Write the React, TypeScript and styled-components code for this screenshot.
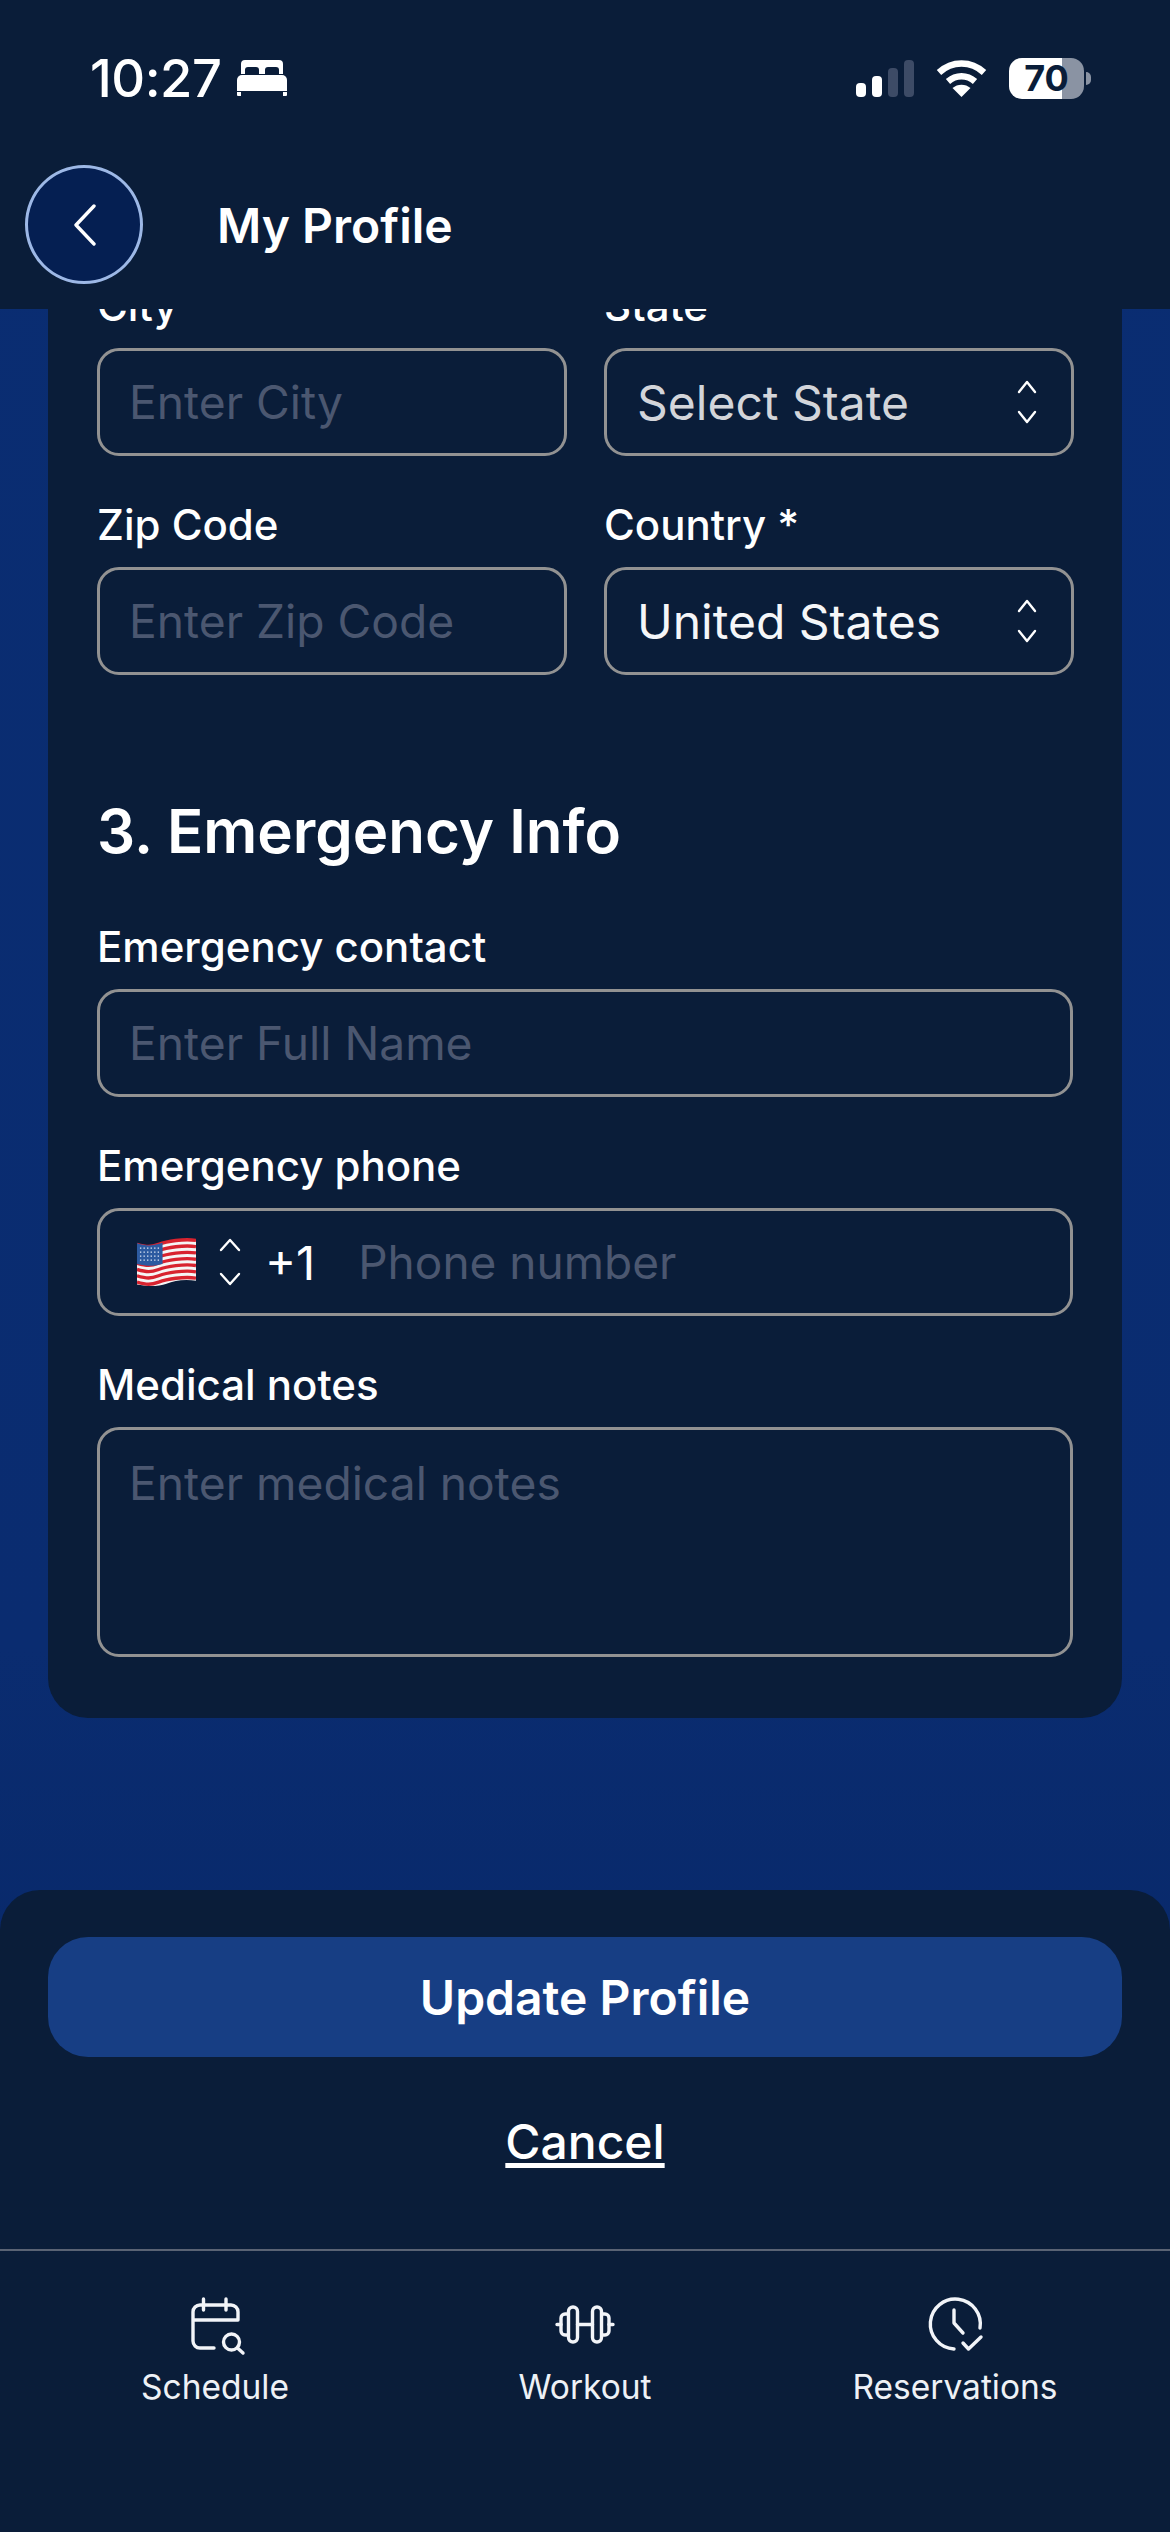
import React from 'react';
import styled, { createGlobalStyle } from 'styled-components';

const GlobalStyle = createGlobalStyle`
  html, body {
    margin: 0;
    padding: 0;
    background: #0a1d39;
  }
  * {
    box-sizing: border-box;
  }
`;

const Page = styled.div`
  width: 1170px;
  height: 2532px;
  display: flex;
  flex-direction: column;
  overflow: hidden;
  font-family: Inter, "Liberation Sans", sans-serif;
  color: #fff;
  background: linear-gradient(180deg, #0a2d72 0%, #0a2c70 65%, #062563 100%);
`;

const Header = styled.header`
  flex: none;
  height: 309px;
  background: #0a1d39;
  position: relative;
  z-index: 2;
`;

const StatusBar = styled.div`
  height: 165px;
  padding: 50px 86px 0 90px;
  display: flex;
  justify-content: space-between;
  align-items: flex-start;
`;

const TimeGroup = styled.div`
  display: flex;
  align-items: center;
  gap: 16px;
  height: 56px;
`;

const Time = styled.span`
  font-size: 52.5px;
  font-weight: 500;
  letter-spacing: -0.5px;
`;

const StatusIcons = styled.div`
  display: flex;
  align-items: center;
  height: 56px;
`;

const SignalBars = styled.div`
  display: flex;
  align-items: flex-end;
  gap: 6px;
  height: 37px;
  margin-right: 22px;
`;

const SignalBar = styled.span<{ $h: number; $on?: boolean }>`
  width: 10px;
  height: ${p => p.$h}px;
  border-radius: 4px;
  background: ${p => (p.$on ? '#ffffff' : '#3d4b66')};
`;

const Battery = styled.div`
  width: 75px;
  height: 41px;
  margin-left: 22px;
  border-radius: 13px;
  background: linear-gradient(90deg, #fff 0 53px, #8a93a3 53px 100%);
  color: #0a1d39;
  font-size: 36px;
  font-weight: 700;
  display: flex;
  align-items: center;
  justify-content: center;
  position: relative;
  &::after {
    content: '';
    position: absolute;
    right: -7px;
    top: 14px;
    width: 5px;
    height: 13px;
    border-radius: 0 6px 6px 0;
    background: #8a93a3;
  }
`;

const TitleRow = styled.div`
  display: flex;
  align-items: center;
  padding-left: 25px;
  gap: 74px;
`;

const BackButton = styled.button`
  width: 118px;
  height: 119px;
  border-radius: 50%;
  border: 3px solid #9db8e6;
  background: #051f52;
  color: #fff;
  padding: 0 0 0 2px;
  display: flex;
  align-items: center;
  justify-content: center;
`;

const Title = styled.h1`
  margin: 2px 0 0;
  font-size: 48px;
  font-weight: 600;
`;

const Main = styled.main`
  flex: 1;
  min-height: 0;
  overflow: hidden;
  padding: 0 48px;
`;

const Card = styled.section`
  margin-top: -27px;
  background: #0a1d39;
  border-radius: 0 0 40px 40px;
  padding: 0 49px 61px;
  display: flex;
  flex-direction: column;
`;

const FieldGrid = styled.div`
  display: grid;
  grid-template-columns: 470px 470px;
  column-gap: 37px;
  row-gap: 45px;
`;

const Field = styled.div`
  display: flex;
  flex-direction: column;
`;

const Label = styled.label`
  font-size: 42px;
  font-weight: 500;
  line-height: 48px;
  margin-bottom: 18px;
  color: #fff;
`;

const Input = styled.input`
  width: 100%;
  height: 108px;
  padding: 0 29px;
  border: 3px solid #929292;
  border-radius: 22px;
  background: transparent;
  color: #fff;
  font: 400 46.2px Inter, "Liberation Sans", sans-serif;
  outline: none;
  &::placeholder {
    color: #4b5770;
    opacity: 1;
  }
`;

const Select = styled.div<{ $muted?: boolean }>`
  height: 108px;
  padding: 0 33px 0 30px;
  border: 3px solid #929292;
  border-radius: 22px;
  display: flex;
  align-items: center;
  justify-content: space-between;
  font-size: 48px;
  color: ${p => (p.$muted ? '#d3d5da' : '#f5f6f8')};
`;

const SectionTitle = styled.h2`
  margin: 120px 0 0;
  font-size: 60px;
  line-height: 72px;
  font-weight: 600;
`;

const SectionFields = styled.div`
  margin-top: 56px;
  display: flex;
  flex-direction: column;
  gap: 45px;
`;

const PhoneBox = styled.div`
  height: 108px;
  padding: 0 30px 0 37px;
  border: 3px solid #929292;
  border-radius: 22px;
  display: flex;
  align-items: center;
`;

const FlagIcon = styled.svg`
  flex: none;
  width: 59px;
  height: 50px;
  margin-right: 22px;
`;

const DialCode = styled.span`
  margin: 0 43px 0 23px;
  font-size: 47px;
  color: #fff;
`;

const PhoneInput = styled.input`
  flex: 1;
  min-width: 0;
  border: 0;
  padding: 0;
  background: transparent;
  color: #fff;
  font: 400 46px Inter, "Liberation Sans", sans-serif;
  outline: none;
  &::placeholder {
    color: #4b5770;
    opacity: 1;
  }
`;

const Notes = styled.textarea`
  display: block;
  width: 100%;
  height: 230px;
  padding: 26px 29px;
  border: 3px solid #929292;
  border-radius: 22px;
  background: transparent;
  color: #fff;
  font: 400 46.2px/1.2 Inter, "Liberation Sans", sans-serif;
  outline: none;
  resize: none;
  &::placeholder {
    color: #4b5770;
    opacity: 1;
  }
`;

const Footer = styled.footer`
  flex: none;
  height: 642px;
  background: #0a1d39;
  border-radius: 40px 40px 0 0;
  display: flex;
  flex-direction: column;
`;

const Actions = styled.div`
  flex: none;
  height: 361px;
  padding: 47px 48px 0;
  display: flex;
  flex-direction: column;
  align-items: center;
  border-bottom: 2px solid #5a6374;
`;

const PrimaryButton = styled.button`
  width: 100%;
  height: 120px;
  border: 0;
  border-radius: 40px;
  background: #173e84;
  color: #fff;
  font: 600 48px Inter, "Liberation Sans", sans-serif;
`;

const CancelLink = styled.a`
  margin-top: 56px;
  font-size: 48px;
  font-weight: 500;
  line-height: 58px;
  color: #fff;
  text-decoration: underline;
  text-decoration-thickness: 5px;
  text-underline-offset: 4px;
`;

const TabBar = styled.nav`
  display: grid;
  grid-template-columns: 430px 310px 430px;
  padding-top: 34px;
`;

const Tab = styled.div`
  display: flex;
  flex-direction: column;
  align-items: center;
  gap: 1px;
`;

const TabIcon = styled.svg`
  display: block;
  width: 90px;
  height: 80px;
  fill: none;
  stroke: #f2f4f8;
  stroke-width: 3.4;
  stroke-linecap: round;
  stroke-linejoin: round;
`;

const TabLabel = styled.span`
  font-size: 33.5px;
  font-weight: 400;
  line-height: 42px;
  color: #eef1f6;
`;

const Stepper: React.FC<{ $tall?: boolean }> = ({ $tall }) => (
  <svg
    width={$tall ? 24 : 22}
    height={$tall ? 50 : 44}
    viewBox={$tall ? '0 0 24 50' : '0 0 22 44'}
    fill="none"
    stroke="#fff"
    strokeWidth="2.4"
    strokeLinecap="round"
    strokeLinejoin="round"
  >
    {$tall ? (
      <>
        <path d="M3 13 12 3 21 13" />
        <path d="M3 37 12 47 21 37" />
      </>
    ) : (
      <>
        <path d="M3 12 11 2 19 12" />
        <path d="M3 32 11 42 19 32" />
      </>
    )}
  </svg>
);

const stripeOffsets = [0, 1, 2, 3, 4, 5, 6];

const UsFlag: React.FC = () => (
  <FlagIcon viewBox="0 0 60 50">
    <path d="M0 7C10 10 14 10 22 7S48 1 60 3V44C48 42 38 44 30 47S10 50 0 48Z" fill="#f5f5f5" />
    {stripeOffsets.map(i => (
      <path
        key={i}
        d={`M0 ${7 + i * 6.4}C10 ${10 + i * 6.4} 14 ${10 + i * 6.4} 22 ${7 + i * 6.4}S48 ${1 + i * 6.4} 60 ${3 + i * 6.4}`}
        fill="none"
        stroke="#d8232f"
        strokeWidth="3.4"
      />
    ))}
    <path d="M0 6C10 9 14 9 26 5.5V27C14 30 10 29 0 27Z" fill="#2c5aa0" />
    <path d="M3 11H24M3 15H24M3 19H24M3 23H24" stroke="#dfe8f5" strokeWidth="1.3" strokeDasharray="1.4 2.2" />
  </FlagIcon>
);

export default function App() {
  return (
    <Page>
      <GlobalStyle />
      <Header>
        <StatusBar>
          <TimeGroup>
            <Time>10:27</Time>
            <svg width="50" height="36" viewBox="0 0 50 36" fill="#fff">
              <path d="M8 0H42A4 4 0 0 1 46 4V14H42V10A3 3 0 0 0 39 7H31A3 3 0 0 0 28 10V14H22V10A3 3 0 0 0 19 7H11A3 3 0 0 0 8 10V14H4V4A4 4 0 0 1 8 0Z" />
              <path d="M5 15H45A5 5 0 0 1 50 20V31H0V20A5 5 0 0 1 5 15Z" />
              <path d="M0 32H4V36H1A1 1 0 0 1 0 35ZM46 32H50V35A1 1 0 0 1 49 36H46Z" />
            </svg>
          </TimeGroup>
          <StatusIcons>
            <SignalBars>
              <SignalBar $h={14} $on />
              <SignalBar $h={21} $on />
              <SignalBar $h={29} />
              <SignalBar $h={37} />
            </SignalBars>
            <svg width="51" height="37" viewBox="0 0 51 37" fill="none" stroke="#fff" strokeWidth="6.5">
              <path d="M3 12.5C16 0.5 35 0.5 48 12.5" />
              <path d="M12 21.5C20 14.5 31 14.5 39 21.5" />
              <path d="M25.5 37 16.5 28C21.5 23.5 29.5 23.5 34.5 28Z" fill="#fff" stroke="none" />
            </svg>
            <Battery>70</Battery>
          </StatusIcons>
        </StatusBar>
        <TitleRow>
          <BackButton aria-label="Back">
            <svg width="22" height="42" viewBox="0 0 22 42" fill="none" stroke="#fff" strokeWidth="3.4" strokeLinecap="round" strokeLinejoin="round">
              <path d="M20 2 2 21 20 40" />
            </svg>
          </BackButton>
          <Title>My Profile</Title>
        </TitleRow>
      </Header>

      <Main>
        <Card>
          <FieldGrid>
            <Field>
              <Label>City</Label>
              <Input placeholder="Enter City" />
            </Field>
            <Field>
              <Label>State</Label>
              <Select $muted>
                Select State
                <Stepper />
              </Select>
            </Field>
            <Field>
              <Label>Zip Code</Label>
              <Input placeholder="Enter Zip Code" />
            </Field>
            <Field>
              <Label>Country *</Label>
              <Select>
                United States
                <Stepper />
              </Select>
            </Field>
          </FieldGrid>

          <SectionTitle>3. Emergency Info</SectionTitle>
          <SectionFields>
            <Field>
              <Label>Emergency contact</Label>
              <Input placeholder="Enter Full Name" />
            </Field>
            <Field>
              <Label>Emergency phone</Label>
              <PhoneBox>
                <UsFlag />
                <Stepper $tall />
                <DialCode>+1</DialCode>
                <PhoneInput placeholder="Phone number" />
              </PhoneBox>
            </Field>
            <Field>
              <Label>Medical notes</Label>
              <Notes placeholder="Enter medical notes" />
            </Field>
          </SectionFields>
        </Card>
      </Main>

      <Footer>
        <Actions>
          <PrimaryButton>Update Profile</PrimaryButton>
          <CancelLink>Cancel</CancelLink>
        </Actions>
        <TabBar>
          <Tab>
            <TabIcon viewBox="0 0 90 80">
              <path d="M44 63H30a7 7 0 0 1-7-7V27a7 7 0 0 1 7-7h31a7 7 0 0 1 7 7v8H23" />
              <path d="M33.5 14v11M56 14v11" />
              <circle cx="61.5" cy="57" r="8" />
              <path d="M67.5 63l5.5 5" />
            </TabIcon>
            <TabLabel>Schedule</TabLabel>
          </Tab>
          <Tab>
            <TabIcon viewBox="0 0 90 80">
              <rect x="28.5" y="22" width="9" height="35" rx="4.5" />
              <rect x="52.5" y="22" width="9" height="35" rx="4.5" />
              <path d="M28 29h-3a4 4 0 0 0-4 4v13a4 4 0 0 0 4 4h3M62 29h3a4 4 0 0 1 4 4v13a4 4 0 0 1-4 4h-3" />
              <path d="M37.5 39.5h15M17 39.5h4M69 39.5h4" />
            </TabIcon>
            <TabLabel>Workout</TabLabel>
          </Tab>
          <Tab>
            <TabIcon viewBox="0 0 90 80">
              <path d="M44 64A25 25 0 1 1 70 43" />
              <path d="M44 25v13l9 10" />
              <path d="M53 58l5.5 6L71 52" />
            </TabIcon>
            <TabLabel>Reservations</TabLabel>
          </Tab>
        </TabBar>
      </Footer>
    </Page>
  );
}
